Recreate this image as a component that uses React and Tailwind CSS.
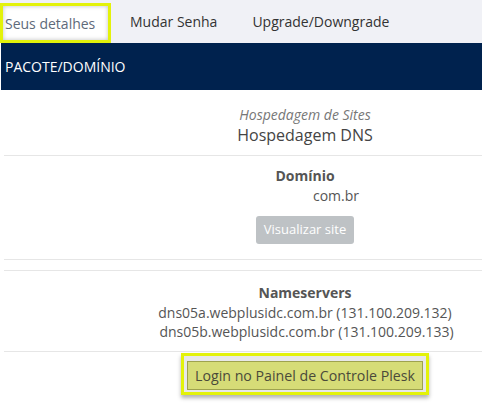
export default function App() {
  const font = { fontFamily: '"Open Sans", sans-serif' };
  return (
    <div className="w-[482px] h-[403px] bg-white overflow-hidden text-[14px]" style={font}>
      {/* Tabs */}
      <div className="h-[43px] bg-[#f0f1f6] flex items-end">
        <div className="h-[40px] w-[111px] border-[3px] border-[#e3f20a] bg-white shadow-[inset_0_0_4px_rgba(0,0,0,0.25)] flex items-center pl-[2px] text-[#5e6a7a]">
          Seus detalhes
        </div>
        <div className="h-[43px] flex items-center ml-[19px] text-[#333]">Mudar Senha</div>
        <div className="h-[43px] flex items-center ml-[35px] text-[#333]">Upgrade/Downgrade</div>
      </div>

      {/* Header */}
      <div className="ml-[1px] h-[47px] bg-[#00224e] flex items-center pl-[4px] text-white text-[14px]">
        PACOTE/DOMÍNIO
      </div>

      {/* Body */}
      <div className="pl-[4px]">
        <div className="flex h-[66px] border-b border-[#e6e6e6]">
          <div className="w-[124px]" />
          <div className="flex-1 flex flex-col items-center pt-[15px]">
            <div className="italic text-[#777] leading-[20px]">Hospedagem de Sites</div>
            <div className="text-[16px] text-[#444] leading-[20px]">Hospedagem DNS</div>
          </div>
        </div>

        <div className="flex h-[104px] border-b border-[#e6e6e6]">
          <div className="w-[124px]" />
          <div className="flex-1 flex flex-col items-center pt-[10px]">
            <div className="font-bold text-[#555] leading-[20px]">Domínio</div>
            <div className="text-[#555] leading-[20px] pl-[62px]">com.br</div>
            <div className="mt-[10px] h-[28px] px-[8px] rounded-[3px] bg-[#bec2c5] text-white text-[13px] flex items-center">
              Visualizar site
            </div>
          </div>
        </div>

        <div className="h-[11px] border-b border-[#e6e6e6]" />

        <div className="flex h-[81px] border-b border-[#e6e6e6]">
          <div className="w-[124px]" />
          <div className="flex-1 flex flex-col items-center pt-[12px] text-[#555] leading-[19.5px]">
            <div className="font-bold">Nameservers</div>
            <div>dns05a.webplusidc.com.br (131.100.209.132)</div>
            <div className="pl-[3px]">dns05b.webplusidc.com.br (131.100.209.133)</div>
          </div>
        </div>

        <div className="flex">
          <div className="w-[124px]" />
          <div className="flex-1 flex justify-center pt-[1px]">
            <div className="border-[3px] border-[#e3f20a] bg-[#e8e8e8] pt-[5px] pb-[2px] px-[3px] shadow-[0_3px_4px_rgba(0,0,0,0.3)]">
              <div className="h-[29px] px-[7px] border border-[#9ea24e] bg-[#d6dc77] text-[#4a4a3a] text-[14.2px] flex items-center">
                Login no Painel de Controle Plesk
              </div>
            </div>
          </div>
        </div>
      </div>
    </div>
  );
}
